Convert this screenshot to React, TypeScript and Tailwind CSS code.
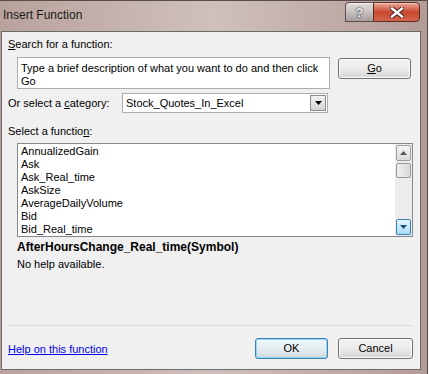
const functions = [
  "AnnualizedGain",
  "Ask",
  "Ask_Real_time",
  "AskSize",
  "AverageDailyVolume",
  "Bid",
  "Bid_Real_time",
];

const TitleButtons = () => (
  <div className="flex mt-[1px] mr-[7px] h-[20px]">
    <div className="w-[28px] h-full rounded-tl-[4px] border border-r-0 border-[#5b4f4c] bg-gradient-to-b from-[#e2dcdb] via-[#c9c2c1] to-[#a69c9b] flex items-center justify-center shadow-[inset_0_1px_0_#f6f2f1]">
      <span className="text-[13px] font-bold leading-none text-[#f4f4f4] [text-shadow:0_0_2px_#303030,0_0_1px_#303030]">
        ?
      </span>
    </div>
    <div className="w-[47px] h-full rounded-tr-[4px] rounded-br-[4px] border border-[#5b2a22] bg-gradient-to-b from-[#e9a898] via-[#c9472f] to-[#d4644c] flex items-center justify-center shadow-[inset_0_1px_0_#f4c6ba]">
      <svg width="14" height="11" viewBox="0 0 14 11">
        <path
          d="M2 1.5 L12 9.5 M12 1.5 L2 9.5"
          stroke="#3a1a14"
          strokeWidth="4.2"
          strokeLinecap="square"
        />
        <path
          d="M2 1.5 L12 9.5 M12 1.5 L2 9.5"
          stroke="#ffffff"
          strokeWidth="2.4"
          strokeLinecap="square"
        />
      </svg>
    </div>
  </div>
);

const DownTriangle = ({ color }: { color: string }) => (
  <svg width="7" height="4" viewBox="0 0 7 4">
    <path d="M0 0 H7 L3.5 4 Z" fill={color} />
  </svg>
);

const Scrollbar = () => (
  <div className="w-[17px] h-full bg-[#ececec] flex flex-col items-center py-[1px]">
    <div className="w-[15px] h-[16px] border border-[#a0a0a0] rounded-[2px] bg-gradient-to-b from-[#f4f4f4] to-[#dcdcdc] flex items-center justify-center">
      <svg width="7" height="4" viewBox="0 0 7 4">
        <path d="M0 4 H7 L3.5 0 Z" fill="#5a5a5a" />
      </svg>
    </div>
    <div className="mt-[2px] w-[15px] h-[15px] border border-[#9a9a9a] rounded-[2px] bg-gradient-to-r from-[#f0f0f0] to-[#d8d8d8]" />
    <div className="flex-1" />
    <div className="w-[15px] h-[16px] border border-[#3c7fb1] rounded-[2px] bg-gradient-to-b from-[#e3f4fc] to-[#a9dbf6] flex items-center justify-center">
      <DownTriangle color="#1b4f82" />
    </div>
  </div>
);

const App = () => {
  return (
    <div className="w-[429px] h-[374px] flex bg-white font-['Liberation_Sans',Arial,sans-serif] text-[11px] text-black">
      <div className="w-[428px] h-full flex flex-col border-r border-t border-[#5a4c48] bg-gradient-to-r from-[#b9a29c] via-[#cfc0bb] to-[#b49c96]">
        <div className="h-[30px] flex items-start justify-between">
          <span className="mt-[7px] ml-[3px] text-[12px] leading-[14px] text-[#1a1a1a]">
            Insert Function
          </span>
          <TitleButtons />
        </div>

        <div className="ml-[1px] w-[420px] h-[339px] border border-[#6a6a6a] bg-[#f0f0f0] flex flex-col">
          <div className="mt-[5px] ml-[6px] leading-[14px]">
            <span className="underline">S</span>earch for a function:
          </div>

          <div className="mt-[6px] ml-[15px] flex items-start">
            <div className="w-[313px] h-[32px] border border-[#abadb3] bg-white pl-[3px] pt-[4px] leading-[13px]">
              Type a brief description of what you want to do and then click
              <br />
              Go
            </div>
            <button className="ml-[8px] mt-[1px] w-[73px] h-[21px] rounded-[3px] border border-[#707070] bg-gradient-to-b from-[#f3f3f3] via-[#ebebeb] to-[#d6d6d6] text-[11px] leading-none shadow-[inset_0_0_0_1px_#fbfbfb]">
              <span className="underline">G</span>o
            </button>
          </div>

          <div className="mt-[4px] ml-[6px] h-[20px] flex items-center">
            <span className="w-[114px] leading-[14px]">
              Or select a <span className="underline">c</span>ategory:
            </span>
            <div className="w-[206px] h-[20px] border border-[#abadb3] bg-white flex items-center pl-[3px] pr-[1px]">
              <span className="flex-1 leading-[14px]">Stock_Quotes_In_Excel</span>
              <div className="w-[16px] h-[16px] border border-[#8a8a8a] bg-gradient-to-b from-[#f2f2f2] to-[#d4d4d4] flex items-center justify-center">
                <DownTriangle color="#000000" />
              </div>
            </div>
          </div>

          <div className="mt-[11px] ml-[6px] leading-[14px]">
            Select a functio<span className="underline">n</span>:
          </div>

          <div className="mt-[5px] ml-[15px] w-[396px] h-[94px] border border-[#828790] bg-white flex">
            <div className="flex-1 pl-[3px] pt-[1px] flex flex-col leading-[13px] overflow-hidden">
              {functions.map((name) => (
                <span key={name}>{name}</span>
              ))}
            </div>
            <Scrollbar />
          </div>

          <div className="mt-[3px] ml-[15px] font-bold text-[12px] leading-[14px]">
            AfterHoursChange_Real_time(Symbol)
          </div>
          <div className="mt-[3px] ml-[15px] leading-[14px]">No help available.</div>

          <div className="mt-[54px] ml-[6px] w-[405px] h-px bg-[#d5dfe5]" />

          <div className="mt-[12px] ml-[6px] h-[21px] flex items-center">
            <a href="#" className="text-[#0000ee] underline leading-[14px]">
              Help on this function
            </a>
            <div className="flex-1" />
            <button className="w-[73px] h-[21px] rounded-[3px] border border-[#3c7fb1] bg-gradient-to-b from-[#f0f6f9] via-[#e6eef2] to-[#cfd9de] text-[11px] leading-none shadow-[inset_0_0_0_1px_#8fd9f8]">
              OK
            </button>
            <button className="ml-[10px] mr-[7px] w-[75px] h-[21px] rounded-[3px] border border-[#707070] bg-gradient-to-b from-[#f3f3f3] via-[#ebebeb] to-[#d6d6d6] text-[11px] leading-none shadow-[inset_0_0_0_1px_#fbfbfb]">
              Cancel
            </button>
          </div>
        </div>
      </div>
    </div>
  );
};

export default App;
